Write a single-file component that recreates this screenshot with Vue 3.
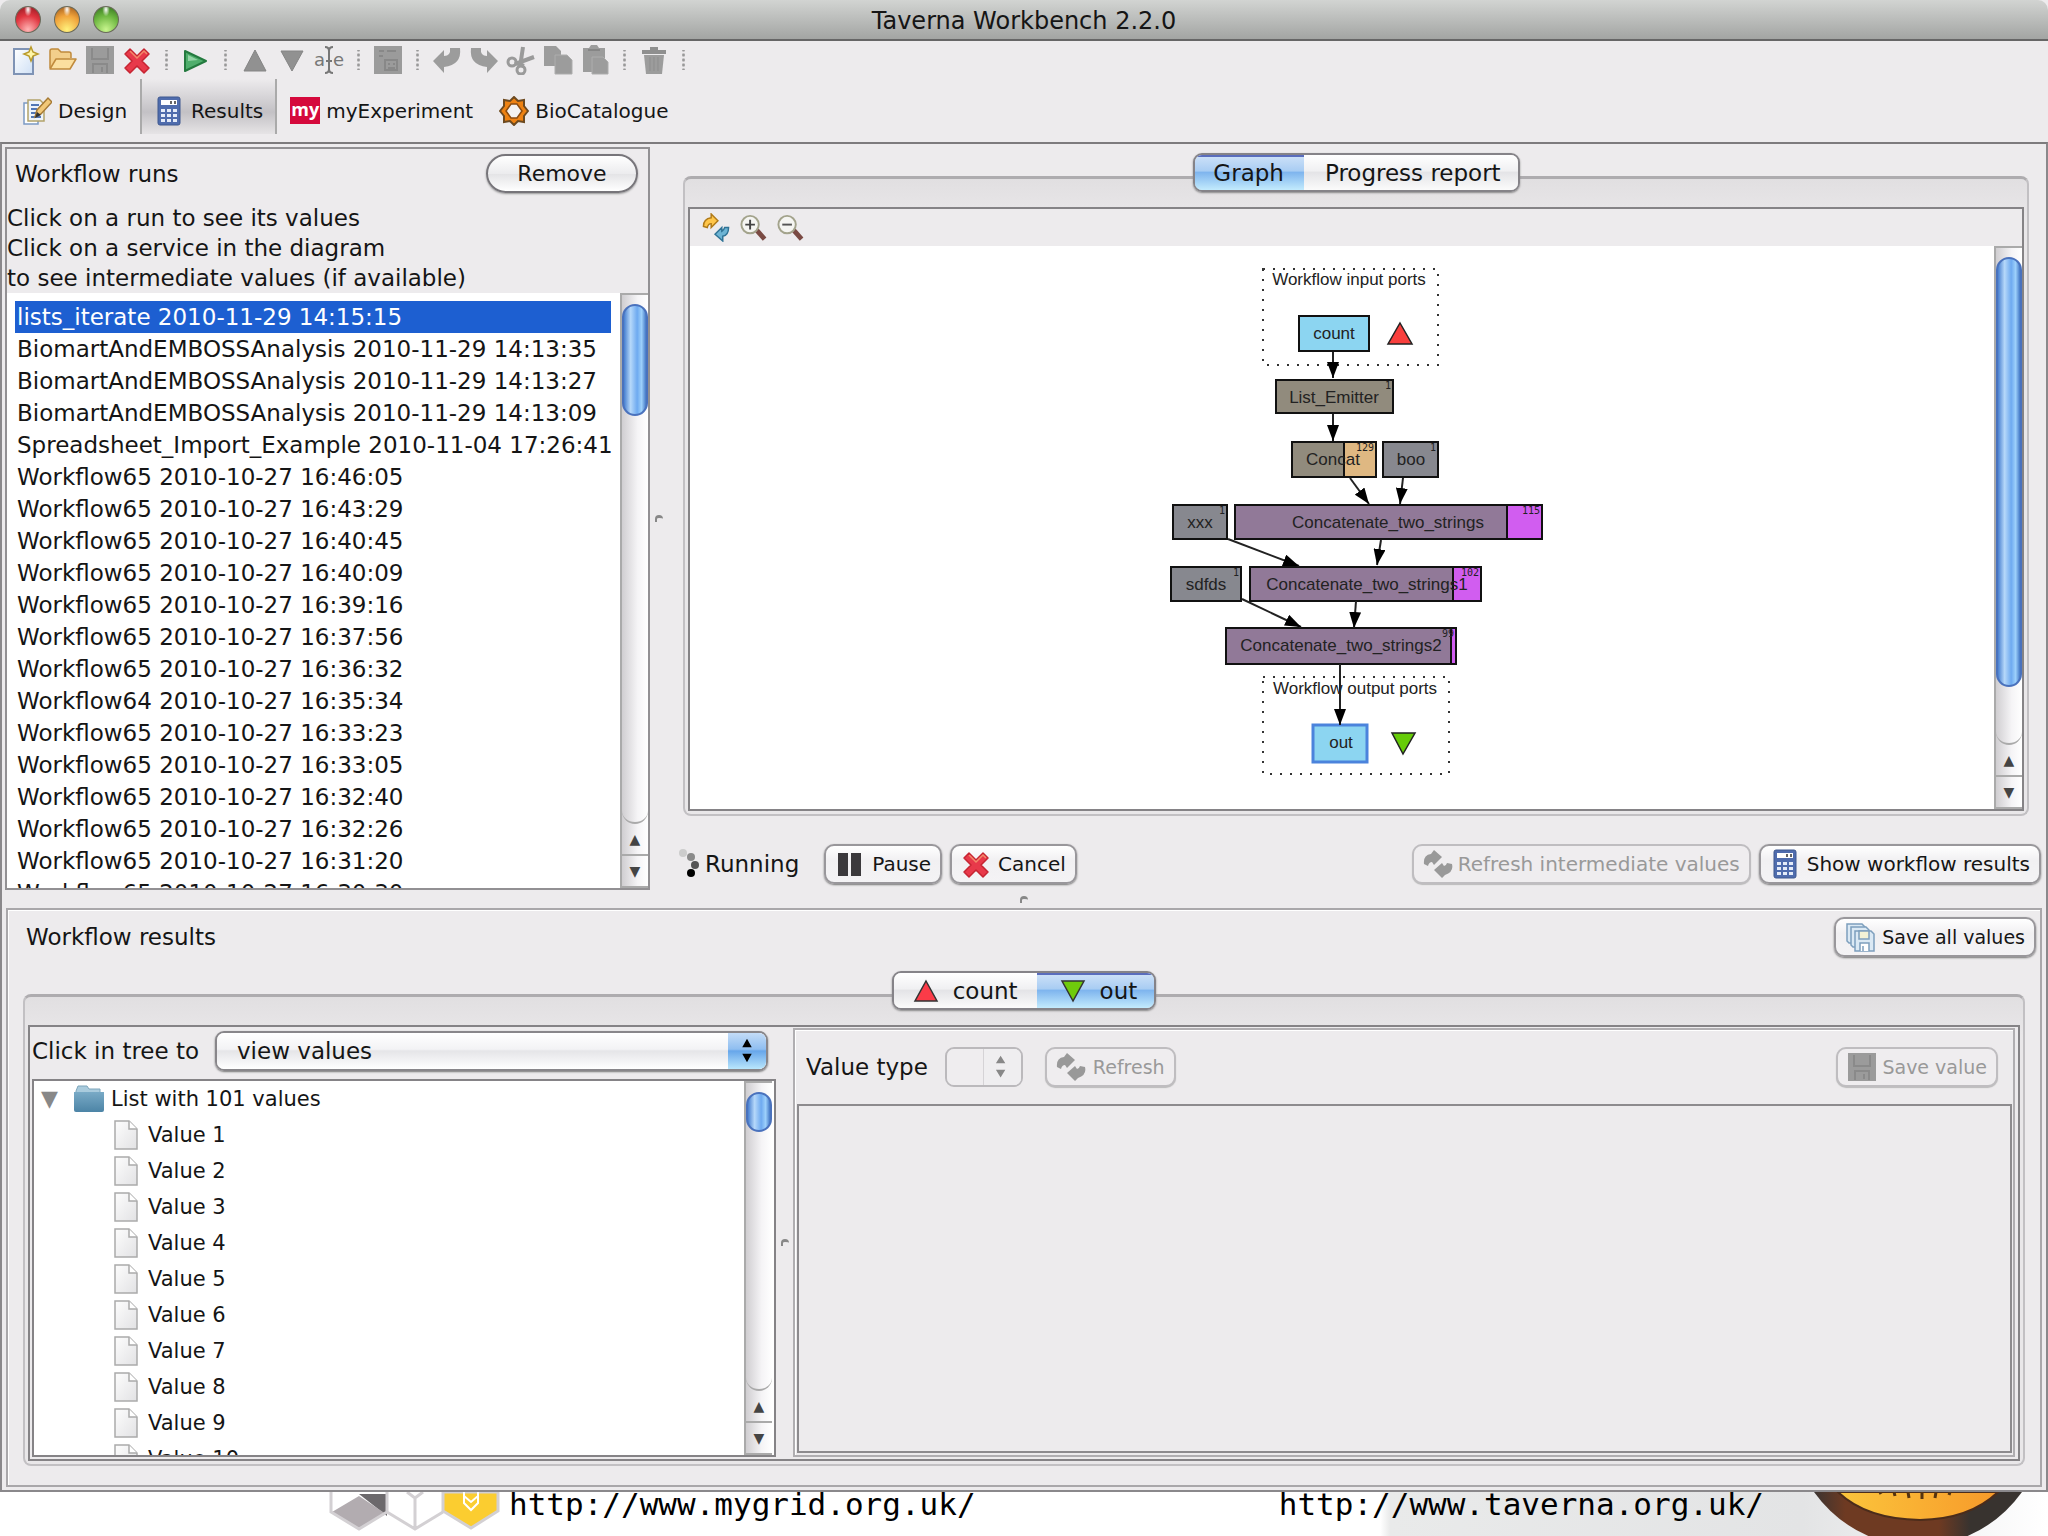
<script setup>
import { ref } from "vue";

const tools = [
  { icon: "new", label: "New workflow" },
  { icon: "open", label: "Open workflow" },
  { icon: "floppy", label: "Save workflow", off: true },
  { icon: "cross", label: "Close workflow" },
  null,
  { icon: "play", label: "Run workflow" },
  null,
  { icon: "up", label: "Move up", off: true },
  { icon: "down", label: "Move down", off: true },
  { icon: "rename", label: "Rename", off: true },
  null,
  { icon: "config", label: "Configure", off: true },
  null,
  { icon: "undo", label: "Undo", off: true },
  { icon: "redo", label: "Redo", off: true },
  { icon: "cut", label: "Cut", off: true },
  { icon: "copy", label: "Copy", off: true },
  { icon: "paste", label: "Paste", off: true },
  null,
  { icon: "trash", label: "Delete", off: true },
  null,
];

const perspectives = [
  { name: "Design", icon: "design" },
  { name: "Results", icon: "calc" },
  { name: "myExperiment", badge: "my" },
  { name: "BioCatalogue", icon: "gear" },
];
const perspective = ref("Results");

const runs = [
  "lists_iterate 2010-11-29 14:15:15",
  "BiomartAndEMBOSSAnalysis 2010-11-29 14:13:35",
  "BiomartAndEMBOSSAnalysis 2010-11-29 14:13:27",
  "BiomartAndEMBOSSAnalysis 2010-11-29 14:13:09",
  "Spreadsheet_Import_Example 2010-11-04 17:26:41",
  "Workflow65 2010-10-27 16:46:05",
  "Workflow65 2010-10-27 16:43:29",
  "Workflow65 2010-10-27 16:40:45",
  "Workflow65 2010-10-27 16:40:09",
  "Workflow65 2010-10-27 16:39:16",
  "Workflow65 2010-10-27 16:37:56",
  "Workflow65 2010-10-27 16:36:32",
  "Workflow64 2010-10-27 16:35:34",
  "Workflow65 2010-10-27 16:33:23",
  "Workflow65 2010-10-27 16:33:05",
  "Workflow65 2010-10-27 16:32:40",
  "Workflow65 2010-10-27 16:32:26",
  "Workflow65 2010-10-27 16:31:20",
  "Workflow65 2010-10-27 16:30:30",
];
const selectedRun = ref(0);
const view = ref("Graph");
const port = ref("out");

// split is the x where the progress part of a service starts
const nodes = [
  { label: "count", x: 1299, y: 317, w: 70, h: 35, tx: 1334, fill: "#8cd5f1" },
  { label: "List_Emitter", x: 1276, y: 381, w: 117, h: 33, tx: 1334, fill: "#918b7d", n: "1" },
  { label: "Concat", x: 1292, y: 443, w: 84, h: 35, tx: 1333, fill: "#918b7d", n: "129", split: 1344, done: "#dfb882" },
  { label: "boo", x: 1383, y: 443, w: 55, h: 35, tx: 1411, fill: "#87888f", n: "1" },
  { label: "xxx", x: 1173, y: 506, w: 54, h: 34, tx: 1200, fill: "#87888f", n: "1" },
  { label: "Concatenate_two_strings", x: 1235, y: 506, w: 307, h: 34, tx: 1388, fill: "#917998", n: "115", split: 1507, done: "#d15df0" },
  { label: "sdfds", x: 1171, y: 568, w: 70, h: 34, tx: 1206, fill: "#87888f", n: "1" },
  { label: "Concatenate_two_strings1", x: 1250, y: 568, w: 231, h: 34, tx: 1367, fill: "#917998", n: "102", split: 1453, done: "#d15df0" },
  { label: "Concatenate_two_strings2", x: 1226, y: 629, w: 230, h: 36, tx: 1341, fill: "#917998", n: "99", split: 1451, done: "#d15df0" },
  { label: "out", x: 1313, y: 726, w: 54, h: 37, tx: 1341, fill: "#8cd5f1", active: true },
];
const edges = [
  [1333, 353, 1333, 379],
  [1333, 415, 1333, 442],
  [1350, 479, 1369, 505],
  [1403, 479, 1400, 505],
  [1228, 540, 1299, 567],
  [1381, 541, 1377, 566],
  [1242, 600, 1301, 628],
  [1356, 602, 1354, 629],
  [1340, 665, 1340, 726],
];
</script>

<template>
  <svg class="sprite" aria-hidden="true">
    <defs>
      <linearGradient id="paper" x1="0" y1="0" x2="1" y2="1"><stop offset="0" stop-color="#fff" /><stop offset="1" stop-color="#cfe0f5" /></linearGradient>
      <linearGradient id="grey" x1="0" y1="0" x2="1" y2="1"><stop offset="0" stop-color="#fdfdfd" /><stop offset="1" stop-color="#e2e2e4" /></linearGradient>
      <linearGradient id="blue" x1="0" y1="0" x2="0" y2="1"><stop offset="0" stop-color="#79aac6" /><stop offset="1" stop-color="#4c84a6" /></linearGradient>
    </defs>
    <symbol id="new" viewBox="0 0 30 30">
      <path d="M3 4h15l4 5v20H3z" fill="url(#paper)" stroke="#7f93b5" stroke-width="2" />
      <path d="M20 2l2 5 5 2-5 2-2 5-2-5-5-2 5-2z" fill="#fff6a8" stroke="#b99a2a" stroke-width="1.5" />
    </symbol>
    <symbol id="open" viewBox="0 0 30 30">
      <path d="M2 23V6q0-2 2-2h6l3 3h8q2 0 2 2v4" fill="#f3cf8b" stroke="#c08a3c" stroke-width="1.5" />
      <path d="M2 24l6-10h20l-6 10z" fill="#fbdf9f" stroke="#c08a3c" stroke-width="1.5" stroke-linejoin="round" />
    </symbol>
    <symbol id="floppy" viewBox="0 0 30 30">
      <path d="M1 1h28v28H1z" fill="#9b9b9b" />
      <path d="M7 3v11h16V3M8 28v-9h14v9M17 22v5" fill="none" stroke="#8a8a8a" stroke-width="2" />
    </symbol>
    <symbol id="cross" viewBox="0 0 30 30">
      <path d="M8 4l7 7 7-7 5 5-7 7 7 7-5 5-7-7-7 7-5-5 7-7-7-7z" fill="#e8394a" stroke="#c62432" stroke-width="1.5" stroke-linejoin="round" />
      <path d="M8 6l7 7 7-7 3 3" fill="none" stroke="#f48a6a" stroke-width="1.5" />
    </symbol>
    <symbol id="play" viewBox="0 0 30 30">
      <path d="M4 6l21 10L4 26z" fill="#4fae6c" stroke="#247a3f" stroke-width="2" stroke-linejoin="round" />
      <path d="M7 10l10 5-10 1z" fill="#93d3a5" />
    </symbol>
    <symbol id="up" viewBox="0 0 30 30"><path d="M15 5l11 21H4z" fill="#919191" stroke="#858585" /></symbol>
    <symbol id="down" viewBox="0 0 30 30"><path d="M15 26L4 6h22z" fill="#919191" stroke="#858585" /></symbol>
    <symbol id="caret" viewBox="0 0 8 28">
      <path d="M0 1q4 0 4 4v18q0 4-4 4M8 1q-4 0-4 4v18q0 4 4 4M1 15h6" fill="none" stroke="#777" stroke-width="2" />
    </symbol>
    <symbol id="config" viewBox="0 0 30 30">
      <path d="M1 1h28v28H1z" fill="#9b9b9b" />
      <path d="M6 6h5M14 6h9M6 11h4M12 15h12v10H12zM15 19h2M20 19h2M15 23h7" fill="none" stroke="#888" stroke-width="2" />
    </symbol>
    <symbol id="undo" viewBox="0 0 30 30"><path d="M1 16L12 5v6q7 0 6-8l10 0q2 17-16 19v6z" fill="#9c9c9c" /></symbol>
    <symbol id="redo" viewBox="0 0 30 30"><path d="M29 16L18 5v6q-7 0-6-8L2 3q-2 17 16 19v6z" fill="#9c9c9c" /></symbol>
    <symbol id="cut" viewBox="0 0 30 30">
      <g fill="none" stroke="#9a9a9a" stroke-width="3">
        <circle cx="6" cy="17" r="4" /><circle cx="15" cy="25" r="4" />
        <path d="M9 19l19-7M14 22l3-20M12 19l6 2" stroke-width="4" />
      </g>
    </symbol>
    <symbol id="copy" viewBox="0 0 30 30">
      <path d="M1 1h12l5 5v15H1z" fill="#9c9c9c" />
      <path d="M12 10h12l5 5v14H12z" fill="#9c9c9c" stroke="#adadad" />
    </symbol>
    <symbol id="paste" viewBox="0 0 30 30">
      <path d="M3 3h6l2-3h6l2 3h6v24H3z" fill="#9c9c9c" />
      <path d="M12 12h11l5 5v12H12z" fill="#9c9c9c" stroke="#adadad" /><path d="M8 5h12" stroke="#868686" stroke-width="2" />
    </symbol>
    <symbol id="trash" viewBox="0 0 30 30">
      <path d="M3 5h8V2h8v3h8v4H3z" fill="#8f8f8f" />
      <path d="M5 10h20l-2 19H7z" fill="#9c9c9c" /><path d="M11 12v14M15 12v14M19 12v14" stroke="#8d8d8d" />
    </symbol>
    <symbol id="design" viewBox="0 0 30 30">
      <path d="M2 7h14v21H2z" fill="#fff" stroke="#7c9ac4" stroke-width="1.5" />
      <path d="M6 4h12l4 4v17H6z" fill="#eef4fb" stroke="#b3a36a" stroke-width="1.5" />
      <path d="M9 9h8M9 13h6M9 17h5M9 21h10" stroke="#5277b5" stroke-width="2" />
      <path d="M13 21l2-7L26 2l4 4-11 12z" fill="#f1c878" stroke="#a67a35" stroke-width="1.5" /><path d="M13 22l2-6 4 3z" fill="#333" />
    </symbol>
    <symbol id="calc" viewBox="0 0 30 30">
      <rect x="4" y="1" width="22" height="28" rx="2" fill="#4f6cad" stroke="#3f5890" />
      <path d="M7 4h16v5H7z" fill="#fff" /><path d="M16 5h2v3h-2zM20 5h2v3h-2z" fill="#666" />
      <path d="M7 13h4v3H7zM13 13h4v3h-4zM19 13h4v3h-4zM7 18h4v3H7zM13 18h4v3h-4zM19 18h4v3h-4zM7 23h4v3H7zM13 23h4v3h-4zM19 23h4v3h-4z" fill="#e4ebf8" />
    </symbol>
    <symbol id="gear" viewBox="0 0 30 30">
      <path d="M15 1l4 4 6-1v6l4 5-4 5v6l-6-1-4 4-4-4-6 1v-6l-4-5 4-5V4l6 1z" fill="#ee8212" stroke="#6d4a20" stroke-width="2" />
      <path d="M12 8h6l5 7-5 7h-6l-5-7z" fill="#f4f2f0" stroke="#8b4c10" stroke-width="1.5" />
    </symbol>
    <symbol id="sync" viewBox="0 0 30 30">
      <path d="M2 14q0-8 8-9V1l7 7-7 7v-4q-3 0-4 4z" fill="#ffc64a" stroke="#b07a18" stroke-width="1.5" />
      <path d="M28 15q0 8-6 9v5l-8-7 7-7v4q2-1 3-4z" fill="#6db4d4" stroke="#2f7396" stroke-width="1.5" />
    </symbol>
    <symbol id="refresh" viewBox="0 0 30 30">
      <path d="M1 15q-1-9 7-10l3-4 8 7-8 8-2-3q-3 0-4 4zM29 15q2 8-7 11l-3 3-8-8 8-7 2 3q2 0 3-3z" fill="#999" />
    </symbol>
    <symbol id="zoomin" viewBox="0 0 30 30">
      <path d="M19 18l8 9" stroke="#7a4a43" stroke-width="5" />
      <circle cx="12" cy="12" r="9" fill="#f5f5f2" stroke="#a3a38c" stroke-width="2" /><path d="M7 12h10M12 7v10" stroke="#444" stroke-width="2" />
    </symbol>
    <symbol id="zoomout" viewBox="0 0 30 30">
      <path d="M19 18l8 9" stroke="#7a4a43" stroke-width="5" />
      <circle cx="12" cy="12" r="9" fill="#f5f5f2" stroke="#a3a38c" stroke-width="2" /><path d="M7 12h10" stroke="#555" stroke-width="2" />
    </symbol>
    <symbol id="saveall" viewBox="0 0 30 30">
      <g fill="#dbe9f4" stroke="#7d9fbd" stroke-width="1.5">
        <path d="M2 2h15l3 3v16H4l-2-2z" /><path d="M6 5h15l3 3v17H8l-2-2z" /><path d="M10 9h16l3 3v17H10z" />
        <path d="M14 9v8h10V9z" fill="#f3f2d6" /><path d="M15 29v-8h9v8M18 24v5" fill="#fff" />
      </g>
    </symbol>
    <symbol id="pause" viewBox="0 0 30 30"><path d="M3 4h10v23H3zM16 4h10v23H16z" fill="#3b393c" /></symbol>
    <symbol id="red" viewBox="0 0 30 30"><path d="M15 5l11 20H4z" fill="#fb3b48" stroke="#333" stroke-width="1.5" /></symbol>
    <symbol id="green" viewBox="0 0 30 30"><path d="M15 25L4 5h22z" fill="#6fcb0c" stroke="#333" stroke-width="1.5" /></symbol>
    <symbol id="folder" viewBox="0 0 32 28">
      <path d="M3 6l2-5h9l2 3h11v6H3z" fill="#a9cbdd" stroke="#7da5bb" />
      <path d="M1 7h30v18q0 2-2 2H3q-2 0-2-2z" fill="url(#blue)" />
    </symbol>
    <symbol id="file" viewBox="0 0 24 30">
      <path d="M1 1h14l8 8v20H1z" fill="url(#grey)" stroke="#aaa" stroke-width="1.5" /><path d="M15 1v8h8" fill="#fff" stroke="#aaa" stroke-width="1.5" />
    </symbol>
  </svg>

  <main class="window">
    <header class="titlebar">
      <div class="lights"><i class="red"></i><i class="amber"></i><i class="lime"></i></div>
      <h1>Taverna Workbench 2.2.0</h1>
    </header>

    <div class="toolbar">
      <template v-for="(t, i) in tools" :key="i">
        <button v-if="t" class="tool" :title="t.label" :aria-label="t.label" :disabled="t.off">
          <span v-if="t.icon === 'rename'" class="rename">a<svg><use href="#caret" /></svg>e</span>
          <svg v-else class="icon"><use :href="'#' + t.icon" /></svg>
        </button>
        <span v-else class="sep"></span>
      </template>
    </div>

    <nav class="perspectives">
      <button v-for="p in perspectives" :key="p.name" :class="{ on: perspective === p.name }" @click="perspective = p.name">
        <span v-if="p.badge" class="badge">{{ p.badge }}</span>
        <svg v-else class="icon"><use :href="'#' + p.icon" /></svg>{{ p.name }}
      </button>
    </nav>

    <div class="workspace">
      <div class="upper">
        <section class="runs">
          <div class="runs-head">
            <h2>Workflow runs</h2>
            <button class="remove">Remove</button>
          </div>
          <p>Click on a run to see its values<br />Click on a service in the diagram<br />to see intermediate values (if available)</p>
          <div class="scroller">
            <ul class="run-list" role="listbox">
              <li v-for="(r, i) in runs" :key="r" role="option" :aria-selected="i === selectedRun" :class="{ on: i === selectedRun }" @click="selectedRun = i">{{ r }}</li>
            </ul>
            <div class="bar"><div class="track"><div class="thumb short"></div></div><b>▲</b><b>▼</b></div>
          </div>
        </section>

        <div class="vsplit"><i></i></div>

        <section class="monitor">
          <div class="tabs view-tabs" role="tablist">
            <button role="tab" :class="{ on: view === 'Graph' }" @click="view = 'Graph'">Graph</button>
            <button role="tab" :class="{ on: view === 'Progress report' }" @click="view = 'Progress report'">Progress report</button>
          </div>
          <div class="frame graph-frame">
            <div class="box graph-box">
              <div class="graph-tools">
                <button class="tool" aria-label="Refresh diagram"><svg class="icon"><use href="#sync" /></svg></button>
                <button class="tool" aria-label="Zoom in"><svg class="icon"><use href="#zoomin" /></svg></button>
                <button class="tool" aria-label="Zoom out"><svg class="icon"><use href="#zoomout" /></svg></button>
              </div>
              <div class="scroller">
                <div class="canvas">
                  <svg class="diagram" viewBox="1122 247 440 540">
                    <defs>
                      <marker id="head" viewBox="0 0 16 12" refX="16" refY="6" markerWidth="16" markerHeight="12" markerUnits="userSpaceOnUse" orient="auto">
                        <path d="M0 0l16 6-16 6z" />
                      </marker>
                    </defs>
                    <rect class="ports" x="1263" y="270" width="175" height="96" />
                    <rect class="ports" x="1263" y="678" width="186" height="97" />
                    <text x="1349" y="286">Workflow input ports</text>
                    <text x="1355" y="695">Workflow output ports</text>
                    <g v-for="n in nodes" :key="n.label">
                      <rect :class="['node', { active: n.active }]" :x="n.x" :y="n.y" :width="n.w" :height="n.h" :fill="n.fill" />
                      <rect v-if="n.split" class="node" :x="n.split" :y="n.y" :width="n.x + n.w - n.split" :height="n.h" :fill="n.done" />
                      <text :x="n.tx" :y="n.y + 23">{{ n.label }}</text>
                      <text v-if="n.n" class="count" :x="n.x + n.w - 2" :y="n.y + 9">{{ n.n }}</text>
                    </g>
                    <line v-for="(e, i) in edges" :key="i" class="edge" :x1="e[0]" :y1="e[1]" :x2="e[2]" :y2="e[3]" marker-end="url(#head)" />
                    <path d="M1400 324l12 21h-24z" fill="#f93f3d" stroke="#222" stroke-width="1.5" />
                    <path d="M1392 734h23l-12 21z" fill="#66cc08" stroke="#222" stroke-width="1.5" />
                  </svg>
                </div>
                <div class="bar"><div class="track"><div class="thumb long"></div></div><b>▲</b><b>▼</b></div>
              </div>
            </div>
          </div>
          <div class="controls">
            <svg class="spinner" viewBox="0 0 20 30">
              <circle cx="4" cy="4" r="4" fill="#ccc" /><circle cx="12" cy="8" r="4" fill="#8a8a8a" /><circle cx="16" cy="16" r="4" fill="#555" /><circle cx="12" cy="24" r="4" fill="#000" />
            </svg>
            <span class="status">Running</span>
            <button class="btn pause"><svg class="icon"><use href="#pause" /></svg>Pause</button>
            <button class="btn cancel"><svg class="icon"><use href="#cross" /></svg>Cancel</button>
            <button class="btn push" disabled><svg class="icon"><use href="#refresh" /></svg>Refresh intermediate values</button>
            <button class="btn"><svg class="icon"><use href="#calc" /></svg>Show workflow results</button>
          </div>
        </section>
      </div>

      <div class="hsplit"><i></i></div>

      <section class="results">
        <div class="results-head">
          <h2>Workflow results</h2>
          <button class="btn small"><svg class="icon"><use href="#saveall" /></svg>Save all values</button>
        </div>
        <div class="tabs port-tabs" role="tablist">
          <button role="tab" :class="{ on: port === 'count' }" @click="port = 'count'"><svg class="icon"><use href="#red" /></svg>count</button>
          <button role="tab" :class="{ on: port === 'out' }" @click="port = 'out'"><svg class="icon"><use href="#green" /></svg>out</button>
        </div>
        <div class="frame results-frame">
          <div class="box results-box">
            <div class="tree-side">
              <div class="mode">
                <label for="mode">Click in tree to</label>
                <span class="select">
                  <select id="mode"><option>view values</option><option>save values</option></select>
                  <svg viewBox="0 0 38 38"><path d="M19 6l5 9H14zM19 31l5-9H14z" /></svg>
                </span>
              </div>
              <div class="scroller tree-box">
                <ul class="tree">
                  <li class="root"><span class="twist">▼</span><svg class="folder"><use href="#folder" /></svg>List with 101 values</li>
                  <li v-for="n in 10" :key="n" class="leaf"><svg class="file"><use href="#file" /></svg>Value {{ n }}</li>
                </ul>
                <div class="bar"><div class="track"><div class="thumb tiny"></div></div><b>▲</b><b>▼</b></div>
              </div>
            </div>
            <div class="vsplit narrow"><i></i></div>
            <div class="value-side">
              <div class="value-head">
                <label for="type">Value type</label>
                <span class="select off">
                  <select id="type" disabled></select>
                  <svg viewBox="0 0 38 38"><path d="M17 7l5 8H12zM17 30l5-8H12z" /></svg>
                </span>
                <button class="btn small refresh" disabled><svg class="icon"><use href="#refresh" /></svg>Refresh</button>
                <button class="btn small push" disabled><svg class="icon"><use href="#floppy" /></svg>Save value</button>
              </div>
              <div class="value"></div>
            </div>
          </div>
        </div>
      </section>
    </div>
  </main>

  <footer class="desktop">
    <svg class="cubes" viewBox="0 0 172 44">
      <path d="M30 2h28v22z" fill="#6c696c" />
      <path d="M30 4l27 18-28 15L3 20z" fill="#b2acb0" />
      <path d="M2 0v20l28 17 28-17V0M58 20l28 17 28-17M86 37V6l-8-6M86 6l8-6" fill="none" stroke="#d3d0d3" stroke-width="3" />
      <path d="M114 0h55v19l-27 17-28-17z" fill="#fbcd30" stroke="#d3d0d3" stroke-width="3" />
      <path d="M135 0v11l7 7 7-7V0M135 4l7 6 7-6" fill="none" stroke="#fff" stroke-width="2" />
    </svg>
    <a href="http://www.mygrid.org.uk/">http://www.mygrid.org.uk/</a>
    <div class="haze">
      <a href="http://www.taverna.org.uk/">http://www.taverna.org.uk/</a>
      <svg class="wheel" viewBox="0 0 208 44">
        <defs>
          <linearGradient id="rim" x1="0" x2="1"><stop offset="0" stop-color="#3b3431" /><stop offset="0.15" stop-color="#6e3a22" /><stop offset="0.6" stop-color="#6e3a22" /><stop offset="0.75" stop-color="#38332f" /></linearGradient>
          <linearGradient id="flesh" x1="0" x2="1"><stop offset="0" stop-color="#fbc53c" /><stop offset="1" stop-color="#f79a2a" /></linearGradient>
        </defs>
        <path d="M0 0h208q-36 50-104 56Q36 50 0 0z" fill="url(#rim)" />
        <path d="M24 0h160q-28 27-78 28Q52 27 24 0z" fill="url(#flesh)" stroke="#4b2c1b" stroke-width="2" />
        <path d="M66 0l1 2M80 0l1 4M94 0l1 6M108 0v7M122 0l-1 6M136 0l-1 3" stroke="#553310" stroke-width="3" />
      </svg>
    </div>
  </footer>
</template>

<style>
body {
  margin: 0;
}

#app {
  height: 100vh;
  min-height: 1200px;
  display: flex;
  flex-direction: column;
  overflow: hidden;
  background: #fff;
}
</style>

<style scoped>
* {
  box-sizing: border-box;
}

.sprite {
  position: absolute;
  width: 0;
  height: 0;
}

.window {
  flex: 1;
  min-height: 0;
  display: flex;
  flex-direction: column;
  background: #edebed;
  color: #151515;
  font-family: "DejaVu Sans", sans-serif;
  font-size: 23px;
  line-height: 30px;
}

h1,
h2,
p,
ul {
  margin: 0;
  padding: 0;
  font-size: 23px;
  font-weight: 400;
  list-style: none;
}

button,
select {
  font-family: inherit;
  color: inherit;
}

.icon {
  width: 30px;
  height: 30px;
  flex: none;
  display: block;
}

.titlebar {
  height: 41px;
  display: grid;
  grid-template-columns: 1fr auto 1fr;
  align-items: center;
  background: linear-gradient(#d2d4d2, #a3a5a3);
  border-bottom: 2px solid #666;
  border-radius: 10px 10px 0 0;
}

.titlebar h1 {
  font-size: 24px;
  padding-top: 2px;
}

.lights {
  display: flex;
  gap: 13px;
  padding-left: 15px;
}

.lights i {
  width: 26px;
  height: 27px;
  border-radius: 50%;
  border: 1px solid #6a6a5a;
}

.lights .red {
  background: radial-gradient(ellipse at 50% 10%, #fff 0, transparent 22%), radial-gradient(circle at 50% 90%, #ffb5b5, #e0353f 55%, #8f1820);
}

.lights .amber {
  background: radial-gradient(ellipse at 50% 10%, #fff 0, transparent 22%), radial-gradient(circle at 50% 90%, #fff27c, #f0a33b 55%, #99541a);
}

.lights .lime {
  background: radial-gradient(ellipse at 50% 10%, #fff 0, transparent 22%), radial-gradient(circle at 50% 90%, #c8f58e, #6cb63f 55%, #2f6d1c);
}

.toolbar {
  height: 38px;
  display: flex;
  align-items: center;
  gap: 7px;
  padding-left: 11px;
}

.tool {
  padding: 0;
  border: 0;
  background: none;
}

.rename {
  width: 30px;
  height: 30px;
  display: flex;
  align-items: center;
  justify-content: center;
  font-size: 18px;
  line-height: 30px;
  color: #777;
}

.rename svg {
  width: 8px;
  height: 28px;
  flex: none;
}

.sep {
  width: 15px;
  height: 20px;
  background: radial-gradient(circle, #999 1px, transparent 2px) center / 15px 5px;
}

.perspectives {
  height: 63px;
  display: flex;
  padding-left: 9px;
}

.perspectives button {
  height: 55px;
  display: flex;
  align-items: center;
  gap: 6px;
  padding: 8px 13px 0;
  border: 0;
  background: none;
  font-size: 20px;
}

.perspectives button.on {
  gap: 7px;
  padding: 8px 12px 0;
  background: linear-gradient(#edebed, #c3c1c5 60%, #e6e4e6);
  border: solid #aaa;
  border-width: 0 2px;
}

.badge {
  width: 30px;
  height: 27px;
  background: #d5093c;
  color: #fff;
  font-family: "Open Sans", sans-serif;
  font-size: 18px;
  font-weight: 700;
  line-height: 24px;
  text-align: center;
}

.workspace {
  flex: 1;
  min-height: 0;
  display: grid;
  grid-template-rows: 743fr 18px 579fr;
  padding: 3px 4px 3px;
  border: 2px solid #8a888b;
  border-top-color: #7d7b7d;
}

.upper {
  min-height: 0;
  display: flex;
}

.runs {
  width: 645px;
  flex: none;
  display: flex;
  flex-direction: column;
  margin-left: -1px;
  border: 2px solid #929093;
}

.runs-head {
  display: flex;
  justify-content: space-between;
  align-items: center;
  padding: 5px 10px 4px 8px;
}

.remove {
  width: 152px;
  height: 39px;
  padding: 0;
  border: 2px solid #77757a;
  border-radius: 20px;
  background: linear-gradient(#fff, #ececee 50%, #e4e4e6 52%, #fff);
  font-size: 22px;
  box-shadow: 0 1px 2px #999;
}

.runs p {
  padding: 6px 0 0;
}

.scroller {
  flex: 1;
  min-height: 0;
  display: flex;
  background: #fff;
}

.run-list {
  flex: 1;
  overflow: hidden;
  padding: 8px 9px 0 8px;
}

.run-list li {
  height: 32px;
  line-height: 32px;
  padding-left: 2px;
  white-space: nowrap;
}

.run-list li.on {
  background: #1d5fd1;
  color: #fff;
}

.bar {
  width: 28px;
  flex: none;
  display: flex;
  flex-direction: column;
  border: solid #aaa;
  border-width: 2px 0 0 2px;
  background: linear-gradient(90deg, #d0ced1, #f5f4f6 60%, #fff);
}

.track {
  flex: 1;
  padding-top: 9px;
  border-radius: 0 0 14px 14px;
  border-bottom: 2px solid #aaa;
}

.thumb {
  border-radius: 13px;
  border: 2px solid #4a72bd;
  background: linear-gradient(90deg, #477fd0, #b5d8fa 30%, #6eaaf0 60%, #9dd0fb 80%, #4378c6);
}

.thumb.short {
  height: 112px;
}

.thumb.long {
  height: 430px;
}

.thumb.tiny {
  height: 40px;
}

.bar b {
  height: 32px;
  border-bottom: 2px solid #aaa;
  font-size: 14px;
  line-height: 30px;
  text-align: center;
  font-weight: 400;
  color: #444;
}

.vsplit {
  width: 26px;
  flex: none;
  display: flex;
  align-items: center;
  padding-left: 5px;
}

.vsplit i,
.hsplit i {
  width: 8px;
  height: 7px;
  border: solid #888;
  border-width: 3px 0 0 2px;
  border-radius: 5px 5px 0 0;
}

.hsplit {
  display: flex;
  align-items: center;
  justify-content: center;
}

.vsplit.narrow {
  width: 17px;
}

.monitor {
  flex: 1;
  min-width: 0;
  display: flex;
  flex-direction: column;
  padding-top: 6px;
}

.tabs {
  position: relative;
  align-self: center;
  display: flex;
  height: 39px;
  margin-bottom: -16px;
  border: 2px solid #858388;
  border-radius: 9px;
  overflow: hidden;
  box-shadow: 0 1px 2px #888;
}

.tabs button {
  display: flex;
  align-items: center;
  padding: 0 17px 0 21px;
  border: 0;
  background: linear-gradient(#fff, #f0f0f2 45%, #e4e4e7 50%, #fbfbfb);
  font-size: 23px;
}

.tabs button.on {
  background: linear-gradient(#cfe2f8, #a9cdf3 45%, #7fb5ee 50%, #c3ebfd);
  box-shadow: inset 0 2px #5a6dbd;
}

.view-tabs {
  margin-right: 5px;
}

.view-tabs button:first-child {
  padding: 0 20px 0 18px;
}

.port-tabs .icon {
  margin-right: 12px;
}

.port-tabs button:first-child {
  padding: 0 19px 0 17px;
}

.frame {
  flex: 1;
  min-height: 0;
  display: flex;
  padding: 28px 3px 3px;
  border: 2px solid #c2c0c3;
  border-top: 3px solid #aeacaf;
  border-radius: 8px;
  background: linear-gradient(#e1dfe1, #e9e7e9 40px);
}

.graph-frame {
  margin: 0 13px 0 7px;
}

.box {
  flex: 1;
  min-width: 0;
  min-height: 0;
  display: flex;
  border: 2px solid #858386;
  background: #edebed;
}

.graph-box {
  flex-direction: column;
}

.graph-tools {
  height: 37px;
  flex: none;
  display: flex;
  align-items: center;
  gap: 7px;
  padding-left: 11px;
}

.graph-tools .icon {
  width: 30px;
  height: 29px;
}

.canvas {
  flex: 1;
  display: flex;
  justify-content: center;
  overflow: hidden;
}

.diagram {
  width: 440px;
  height: 540px;
  flex: none;
  font-family: "Liberation Sans", sans-serif;
  font-size: 17px;
}

.diagram text {
  text-anchor: middle;
  fill: #222;
}

.diagram text.count {
  font-size: 10px;
  text-anchor: end;
  font-family: "DejaVu Sans Mono", monospace;
}

.ports {
  fill: none;
  stroke: #333;
  stroke-width: 2;
  stroke-dasharray: 2 8;
}

.node {
  stroke: #111;
  stroke-width: 2;
}

.node.active {
  stroke: #4b83dc;
  stroke-width: 3;
}

.edge {
  stroke: #222;
  stroke-width: 2;
}

.controls {
  flex: none;
  display: flex;
  align-items: center;
  padding: 28px 1px 6px 3px;
}

.spinner {
  width: 20px;
  height: 30px;
}

.status {
  margin: 0 25px 0 6px;
}

.btn {
  height: 40px;
  flex: none;
  display: flex;
  align-items: center;
  gap: 7px;
  padding: 0 9px;
  border: 2px solid #99979b;
  border-radius: 10px;
  background: linear-gradient(#fff, #f1f0f2 40%, #f4f3f5);
  box-shadow: 0 1px 2px #777;
  font-size: 20px;
}

.btn.small {
  font-size: 19px;
}

.btn:disabled {
  color: #999;
  border-color: #bfbdc0;
  background: #efedef;
  box-shadow: 0 1px 1px #bbb;
}

.btn.pause {
  margin-right: 8px;
}

.btn.push {
  gap: 5px;
  margin-left: auto;
}

.btn.push + .btn {
  margin-left: 8px;
}

.results {
  min-height: 0;
  display: flex;
  flex-direction: column;
  border: 2px solid #a9a7aa;
  box-shadow: inset 1px 1px #fff;
}

.results-head {
  display: flex;
  align-items: center;
  justify-content: space-between;
  padding: 7px 4px 14px 18px;
}

.results-frame {
  margin: 0 15px 19px 15px;
}

.results-box {
  padding: 1px 3px 2px 2px;
}

.tree-side {
  width: 744px;
  flex: none;
  display: flex;
  flex-direction: column;
}

.mode {
  display: flex;
  align-items: center;
  gap: 6px;
  padding: 3px 8px 8px 0;
}

.mode label {
  width: 177px;
}

.select {
  position: relative;
  flex: 1;
  height: 40px;
  border: 2px solid #88868a;
  border-radius: 9px;
  overflow: hidden;
  box-shadow: 0 1px 2px #777;
}

.select select {
  width: 100%;
  height: 100%;
  padding: 0 20px;
  border: 0;
  appearance: none;
  background: linear-gradient(#fff, #f3f3f5 45%, #e5e5e8 50%, #fff);
  font-size: 23px;
}

.select svg {
  position: absolute;
  top: 0;
  right: 0;
  width: 38px;
  height: 100%;
  background: linear-gradient(#c3dcf7, #8fbef0 45%, #67a6ea 50%, #b9e6fc);
  pointer-events: none;
}

.select.off {
  flex: none;
  width: 78px;
  border-color: #bbb9bc;
  box-shadow: none;
}

.select.off select {
  background: #efeef0;
}

.select.off svg {
  background: #efeef0;
  border-left: 1px solid #d5d3d6;
  fill: #888;
}

.tree-box {
  padding-right: 2px;
  border: 2px solid #858386;
}

.tree {
  flex: 1;
  overflow: hidden;
  font-size: 21px;
}

.tree li {
  height: 36px;
  display: flex;
  align-items: center;
}

.twist {
  width: 39px;
  padding-left: 7px;
  font-size: 22px;
  color: #888;
}

.folder {
  width: 32px;
  height: 28px;
  margin-right: 6px;
}

.file {
  width: 24px;
  height: 30px;
  margin: 0 10px 0 80px;
}

.value-side {
  flex: 1;
  display: flex;
  flex-direction: column;
  padding: 0 1px 2px 2px;
  border: 2px solid #b0aeb1;
  box-shadow: inset 1px 1px #fff;
}

.value-head {
  display: flex;
  align-items: center;
  height: 74px;
  padding: 0 14px 0 9px;
}

.value-head .select {
  margin: 0 22px 0 17px;
}

.value {
  flex: 1;
  border: 2px solid #8d8b8e;
}

.desktop {
  height: 44px;
  flex: none;
  display: flex;
  overflow: hidden;
  padding-left: 329px;
  background: #fff;
  font-family: "DejaVu Sans Mono", monospace;
  font-size: 31px;
  line-height: 24px;
}

.desktop a {
  color: #000;
  text-decoration: none;
}

.cubes {
  width: 172px;
  height: 44px;
  margin-right: 8px;
}

.haze {
  flex: 1;
  display: flex;
  justify-content: flex-end;
  margin-left: 90px;
  padding-right: 26px;
  background: linear-gradient(90deg, #fff 32%, #e9eaea 33%, #e3e4e5 75%, #fff);
}

.wheel {
  width: 208px;
  height: 44px;
  margin-left: 50px;
}
</style>
